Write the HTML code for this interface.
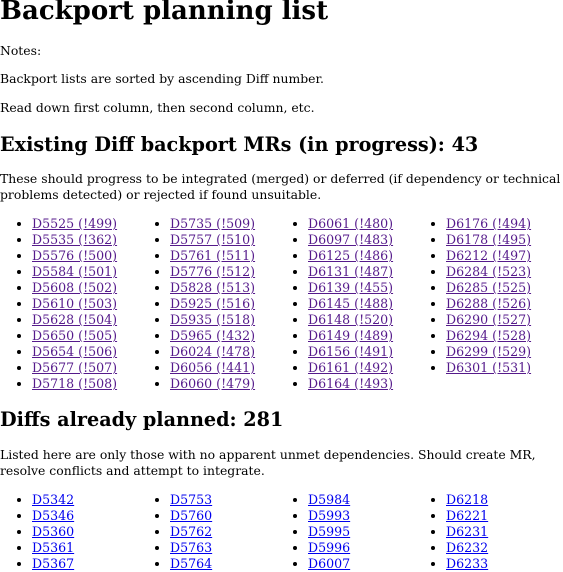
<!DOCTYPE html>
<html><head><meta charset="utf-8"><style>
body{margin:0;width:563px;height:563px;overflow:hidden;background:#fff;color:#000;font-family:"DejaVu Serif","Liberation Serif",serif;font-size:12.4px;position:relative}
.a{position:absolute;left:0;white-space:nowrap;line-height:16px}
h1{position:absolute;left:0;top:-4px;margin:0;font-size:26px;line-height:30px;white-space:nowrap}
h2{position:absolute;left:0;margin:0;font-size:19.2px;line-height:20px;white-space:nowrap}
.cols{position:absolute;left:32px;display:flex}
.cols ul{margin:0;padding:0;width:138px;list-style:disc;line-height:16px;font-size:12.6px}
a{color:#551a8b;text-decoration:underline}
.b a{color:#0000ee}
</style></head><body>
<h1>Backport planning list</h1>
<div class="a" style="top:43px">Notes:</div>
<div class="a" style="top:71px">Backport lists are sorted by ascending Diff number.</div>
<div class="a" style="top:100px">Read down first column, then second column, etc.</div>
<h2 style="top:135px">Existing Diff backport MRs (in progress): 43</h2>
<div class="a" style="top:171px">These should progress to be integrated (merged) or deferred (if dependency or technical<br>problems detected) or rejected if found unsuitable.</div>
<div class="cols" style="top:216px">
<ul><li><a>D5525 (!499)</a></li><li><a>D5535 (!362)</a></li><li><a>D5576 (!500)</a></li><li><a>D5584 (!501)</a></li><li><a>D5608 (!502)</a></li><li><a>D5610 (!503)</a></li><li><a>D5628 (!504)</a></li><li><a>D5650 (!505)</a></li><li><a>D5654 (!506)</a></li><li><a>D5677 (!507)</a></li><li><a>D5718 (!508)</a></li></ul>
<ul><li><a>D5735 (!509)</a></li><li><a>D5757 (!510)</a></li><li><a>D5761 (!511)</a></li><li><a>D5776 (!512)</a></li><li><a>D5828 (!513)</a></li><li><a>D5925 (!516)</a></li><li><a>D5935 (!518)</a></li><li><a>D5965 (!432)</a></li><li><a>D6024 (!478)</a></li><li><a>D6056 (!441)</a></li><li><a>D6060 (!479)</a></li></ul>
<ul><li><a>D6061 (!480)</a></li><li><a>D6097 (!483)</a></li><li><a>D6125 (!486)</a></li><li><a>D6131 (!487)</a></li><li><a>D6139 (!455)</a></li><li><a>D6145 (!488)</a></li><li><a>D6148 (!520)</a></li><li><a>D6149 (!489)</a></li><li><a>D6156 (!491)</a></li><li><a>D6161 (!492)</a></li><li><a>D6164 (!493)</a></li></ul>
<ul><li><a>D6176 (!494)</a></li><li><a>D6178 (!495)</a></li><li><a>D6212 (!497)</a></li><li><a>D6284 (!523)</a></li><li><a>D6285 (!525)</a></li><li><a>D6288 (!526)</a></li><li><a>D6290 (!527)</a></li><li><a>D6294 (!528)</a></li><li><a>D6299 (!529)</a></li><li><a>D6301 (!531)</a></li></ul>
</div>
<h2 style="top:410px">Diffs already planned: 281</h2>
<div class="a" style="top:447px">Listed here are only those with no apparent unmet dependencies. Should create MR,<br>resolve conflicts and attempt to integrate.</div>
<div class="cols b" style="top:492px">
<ul><li><a>D5342</a></li><li><a>D5346</a></li><li><a>D5360</a></li><li><a>D5361</a></li><li><a>D5367</a></li></ul>
<ul><li><a>D5753</a></li><li><a>D5760</a></li><li><a>D5762</a></li><li><a>D5763</a></li><li><a>D5764</a></li></ul>
<ul><li><a>D5984</a></li><li><a>D5993</a></li><li><a>D5995</a></li><li><a>D5996</a></li><li><a>D6007</a></li></ul>
<ul><li><a>D6218</a></li><li><a>D6221</a></li><li><a>D6231</a></li><li><a>D6232</a></li><li><a>D6233</a></li></ul>
</div>
</body></html>
